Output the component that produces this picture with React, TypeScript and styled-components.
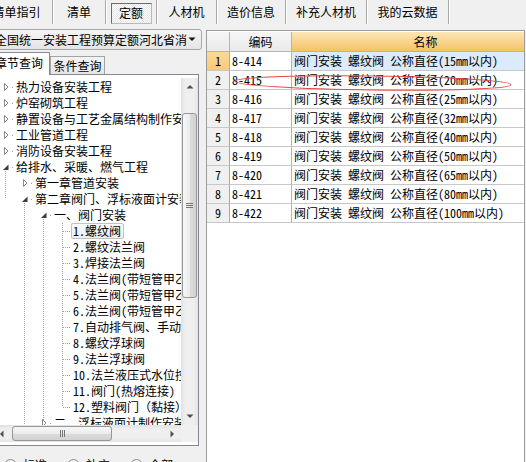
import React from 'react';
import styled, { createGlobalStyle } from 'styled-components';

const FONT = `"Noto Sans Mono CJK SC", "Noto Sans CJK SC", "Liberation Sans", sans-serif`;

const GlobalStyle = createGlobalStyle`
  *, *::before, *::after { box-sizing: border-box; }
  html, body { margin: 0; padding: 0; overflow: hidden; background: #f0f0f0; }
  body { font-family: ${FONT}; font-size: 12px; line-height: 16px; color: #000; }
`;

const Window = styled.div`
  width: 526px;
  height: 462px;
  overflow: hidden;
  display: flex;
  flex-direction: column;
  background: #f0f0f0;
`;

/* top tab strip */
const TabBar = styled.div`
  flex: none;
  display: flex;
  height: 25px;
  margin-left: -19px;
`;

const Tab = styled.div<{ $w: number }>`
  flex: none;
  width: ${p => p.$w}px;
  height: 24px;
  display: flex;
  align-items: center;
  justify-content: center;
  border-right: 1px solid #a9a9a9;
  box-shadow: 1px 0 0 #ffffff;
  white-space: nowrap;
`;

const Pressed = styled.span`
  width: 41px;
  height: 21px;
  margin-top: 2px;
  display: flex;
  align-items: center;
  justify-content: center;
  border: 1px solid #6d6d6d;
  border-right-color: #b9b9b9;
  border-bottom-color: #b9b9b9;
  background: repeating-conic-gradient(#ffffff 0 25%, #e4e4e4 0 50%) 0 0 / 2px 2px;
`;

const Main = styled.div`
  flex: 1;
  min-height: 0;
  display: flex;
  padding-top: 4px;
`;

/* left side: library picker + chapter tree */
const LeftPane = styled.div`
  flex: none;
  width: 202px;
  display: flex;
  flex-direction: column;
`;

const Combo = styled.div`
  flex: none;
  width: 212px;
  height: 21px;
  margin-left: -10px;
  display: flex;
  align-items: center;
  padding: 0 5px 0 4px;
  border: 1px solid #a6a6a6;
  border-radius: 3px;
  background: linear-gradient(#f5f5f5, #e5e5e5);
  white-space: nowrap;
`;

const ComboText = styled.span`
  flex: 1;
  overflow: hidden;
`;

const SubTabs = styled.div`
  flex: none;
  height: 22px;
  margin: 2px 0 0 -10px;
  display: flex;
  align-items: flex-end;
  position: relative;
  z-index: 1;
`;

const SubTab = styled.div<{ $active?: boolean }>`
  flex: none;
  display: flex;
  align-items: center;
  white-space: nowrap;
  border: 1px solid ${p => (p.$active ? '#898c95' : '#a3a3a3')};
  border-bottom: none;
  ${p =>
    p.$active
      ? `width: 60px; height: 23px; margin-bottom: -1px; padding: 0 0 2px 4px; background: #fff;`
      : `width: 55px; height: 18px; justify-content: center; background: linear-gradient(#f4f4f4, #e6e6e6);`}
`;

const TreeBox = styled.div`
  flex: none;
  width: 207px;
  height: 372px;
  margin-left: -8px;
  padding: 3px 0;
  border: 1px solid #828790;
  background: #fff;
  display: flex;
  flex-direction: column;
`;

const ScrollArea = styled.div`
  flex: 1;
  min-height: 0;
  display: flex;
`;

const TreeView = styled.div`
  flex: 1;
  min-width: 0;
  overflow: hidden;
  padding: 1px 0 0 7px;
`;

const TreeRowEl = styled.div`
  height: 16px;
  display: flex;
  align-items: center;
  white-space: nowrap;
`;

const Glyph = styled.svg`
  flex: none;
  display: block;
`;

const Label = styled.span<{ $selected?: boolean }>`
  height: 16px;
  display: flex;
  align-items: center;
  padding: 0 2px 0 1px;
  border: 1px solid ${p => (p.$selected ? '#c2c2c2' : 'transparent')};
  border-radius: 2px;
  background: ${p => (p.$selected ? 'linear-gradient(#fbfbfb, #eeeeee)' : 'transparent')};
`;

const VScroll = styled.div`
  flex: none;
  width: 17px;
  display: flex;
  flex-direction: column;
  background: linear-gradient(90deg, #e2e2e2, #efefef 25%, #efefef 75%, #e4e4e4);
`;

const ScrollBtn = styled.div`
  flex: none;
  width: 17px;
  height: 17px;
  display: flex;
  align-items: center;
  justify-content: center;
`;

const Track = styled.div<{ $dir: 'v' | 'h' }>`
  flex: 1;
  display: flex;
  flex-direction: ${p => (p.$dir === 'v' ? 'column' : 'row')};
`;

const Thumb = styled.div<{ $dir: 'v' | 'h' }>`
  flex: none;
  display: flex;
  align-items: center;
  justify-content: center;
  border: 1px solid #979797;
  border-radius: 3px;
  ${p =>
    p.$dir === 'v'
      ? `margin: 18px 1px 0; height: 185px; background: linear-gradient(90deg, #f7f7f7, #ececec 50%, #dcdcdc 51%, #d2d2d2);`
      : `margin: 1px 0 1px 2px; width: 100px; background: linear-gradient(#f7f7f7, #ececec 50%, #dcdcdc 51%, #d2d2d2);`}
`;

const HScrollRow = styled.div`
  flex: none;
  height: 17px;
  display: flex;
`;

const HScroll = styled.div`
  flex: 1;
  display: flex;
  background: linear-gradient(#e2e2e2, #efefef 25%, #efefef 75%, #e4e4e4);
`;

const Corner = styled.div`
  flex: none;
  width: 17px;
  background: #f0f0f0;
`;

const RadioRow = styled.div`
  flex: none;
  height: 20px;
  margin-top: 9px;
  padding-left: 4px;
  display: flex;
  align-items: center;
  gap: 20px;
`;

const RadioItem = styled.label`
  display: flex;
  align-items: center;
  gap: 6px;
`;

const RadioDot = styled.span<{ $on?: boolean }>`
  width: 13px;
  height: 13px;
  border-radius: 50%;
  border: 1px solid #8e8f8f;
  background: radial-gradient(circle, #ffffff 30%, #dedede);
  display: flex;
  align-items: center;
  justify-content: center;
  &::after {
    content: '';
    width: 5px;
    height: 5px;
    border-radius: 50%;
    background: ${p => (p.$on ? '#1c1c1c' : 'transparent')};
  }
`;

/* right side: quota grid */
const RightPane = styled.div`
  flex: 1;
  min-width: 0;
  margin: 1px 1px 0 4px;
  padding-top: 1px;
  position: relative;
  overflow: hidden;
  border: 1px solid #9c9c9c;
  border-bottom: none;
  background: #fff;
`;

const Grid = styled.div`
  display: grid;
  grid-template-columns: 23px 62px 268px;
`;

const HeadCell = styled.div<{ $orange?: boolean }>`
  height: 20px;
  display: flex;
  align-items: center;
  justify-content: center;
  border-right: 1px solid #b4b4b4;
  border-bottom: 1px solid #b4b4b4;
  background: ${p => (p.$orange ? 'linear-gradient(#fde7b6, #f4c266)' : 'linear-gradient(#f6f6f6, #eaeaea)')};
`;

const NumCell = styled.div<{ $current?: boolean }>`
  height: 19px;
  display: flex;
  align-items: center;
  justify-content: center;
  border-right: 1px solid #a9a9a9;
  border-bottom: 1px solid #c8c8c8;
  background: ${p => (p.$current ? 'linear-gradient(#fdd999, #f9c979)' : '#f0f0f0')};
`;

const Cell = styled.div<{ $tint?: boolean }>`
  height: 19px;
  display: flex;
  align-items: center;
  padding-left: 2px;
  white-space: nowrap;
  overflow: hidden;
  border-right: 1px solid #b4b4b4;
  border-bottom: 1px solid #c8c8c8;
  background: ${p => (p.$tint ? '#dcebfb' : '#ffffff')};
`;

const Mark = styled.svg`
  position: absolute;
  left: 0;
  top: 0;
  pointer-events: none;
`;

type Line = '' | 'f' | 't' | 'b';
type Kind = 'closed' | 'open' | 'leaf';

interface TreeItem {
  label: string;
  kind: Kind;
  cols: Line[];
  selected?: boolean;
}

const leaves = [
  '1.螺纹阀',
  '2.螺纹法兰阀',
  '3.焊接法兰阀',
  '4.法兰阀(带短管甲乙)',
  '5.法兰阀(带短管甲乙)',
  '6.法兰阀(带短管甲乙)',
  '7.自动排气阀、手动放风阀',
  '8.螺纹浮球阀',
  '9.法兰浮球阀',
  '10.法兰液压式水位控制阀',
  '11.阀门(热熔连接)',
  '12.塑料阀门（黏接）',
];

const tree: TreeItem[] = [
  { label: '热力设备安装工程', kind: 'closed', cols: [''] },
  { label: '炉窑砌筑工程', kind: 'closed', cols: [''] },
  { label: '静置设备与工艺金属结构制作安装工程', kind: 'closed', cols: [''] },
  { label: '工业管道工程', kind: 'closed', cols: [''] },
  { label: '消防设备安装工程', kind: 'closed', cols: [''] },
  { label: '给排水、采暖、燃气工程', kind: 'open', cols: ['b'] },
  { label: '第一章管道安装', kind: 'closed', cols: ['f', ''] },
  { label: '第二章阀门、浮标液面计安装', kind: 'open', cols: ['t', 'b'] },
  { label: '一、阀门安装', kind: 'open', cols: ['', 'f', 'b'] },
  ...leaves.map((label, i) => ({
    label,
    kind: 'leaf' as Kind,
    cols: ['', 'f', 'f', i === leaves.length - 1 ? 't' : 'f'] as Line[],
    selected: i === 0,
  })),
  { label: '二、浮标液面计制作安装', kind: 'closed', cols: ['', 'f', 't'] },
];

const DOT = '#a0a0a0';

const VLine = ({ mode }: { mode: Line }) => {
  if (!mode) return null;
  const y1 = mode === 'b' ? 12 : 0;
  const y2 = mode === 't' ? 8 : 16;
  return <line x1={5.5} y1={y1} x2={5.5} y2={y2} stroke={DOT} strokeDasharray="1 1" shapeRendering="crispEdges" />;
};

const TreeRow = ({ item }: { item: TreeItem }) => {
  const level = item.cols.length - 1;
  const own = item.cols[level];
  return (
    <TreeRowEl>
      {item.cols.slice(0, level).map((m, c) => (
        <Glyph key={c} width={19} height={16}>
          <VLine mode={m} />
        </Glyph>
      ))}
      <Glyph width={14} height={16}>
        {item.kind === 'leaf' ? (
          <>
            <VLine mode={own} />
            <line x1={6} y1={8.5} x2={14} y2={8.5} stroke={DOT} strokeDasharray="1 1" shapeRendering="crispEdges" />
          </>
        ) : (
          <>
            <VLine mode={own} />
            {item.kind === 'closed' ? (
              <polygon points="4.5,4.5 4.5,11.5 8,8" fill="#fff" stroke="#8a8a8a" strokeWidth={1} />
            ) : (
              <polygon points="3,11 8.5,11 8.5,5.5" fill="#3c3c3c" />
            )}
            <rect x={12} y={8} width={1} height={1} fill={DOT} />
          </>
        )}
      </Glyph>
      <Label $selected={item.selected}>{item.label}</Label>
    </TreeRowEl>
  );
};

const Arrow = ({ dir, color = '#505050' }: { dir: 'up' | 'down' | 'left' | 'right'; color?: string }) => {
  const pts = {
    up: '0.5,4.5 7.5,4.5 4,1',
    down: '0.5,0.5 7.5,0.5 4,4',
    left: '4.5,0.5 4.5,7.5 1,4',
    right: '0.5,0.5 0.5,7.5 4,4',
  }[dir];
  const v = dir === 'up' || dir === 'down';
  return (
    <svg width={v ? 8 : 5} height={v ? 5 : 8}>
      <polygon points={pts} fill={color} />
    </svg>
  );
};

const Grip = ({ dir }: { dir: 'v' | 'h' }) => (
  <svg width={dir === 'v' ? 7 : 7} height={dir === 'v' ? 7 : 7}>
    {[0, 2, 4].map(o =>
      dir === 'v' ? (
        <rect key={o} x={0} y={o + 1} width={7} height={1} fill="#777" />
      ) : (
        <rect key={o} x={o + 1} y={0} width={1} height={7} fill="#777" />
      ),
    )}
  </svg>
);

const tabs: { label: string; w: number; active?: boolean }[] = [
  { label: '清单指引', w: 72 },
  { label: '清单', w: 53 },
  { label: '定额', w: 51, active: true },
  { label: '人材机', w: 60 },
  { label: '造价信息', w: 69 },
  { label: '补充人材机', w: 81 },
  { label: '我的云数据', w: 82 },
];

const rows = [
  ['8-414', '15'],
  ['8-415', '20'],
  ['8-416', '25'],
  ['8-417', '32'],
  ['8-418', '40'],
  ['8-419', '50'],
  ['8-420', '65'],
  ['8-421', '80'],
  ['8-422', '100'],
];

export default function App() {
  return (
    <>
      <GlobalStyle />
      <Window>
        <TabBar>
          {tabs.map(t => (
            <Tab key={t.label} $w={t.w}>
              {t.active ? <Pressed>{t.label}</Pressed> : t.label}
            </Tab>
          ))}
        </TabBar>

        <Main>
          <LeftPane>
            <Combo>
              <ComboText>全国统一安装工程预算定额河北省消</ComboText>
              <Arrow dir="down" color="#111" />
            </Combo>

            <SubTabs>
              <SubTab $active>章节查询</SubTab>
              <SubTab>条件查询</SubTab>
            </SubTabs>

            <TreeBox>
              <ScrollArea>
                <TreeView>
                  {tree.map((item, i) => (
                    <TreeRow key={i} item={item} />
                  ))}
                </TreeView>
                <VScroll>
                  <ScrollBtn>
                    <Arrow dir="up" />
                  </ScrollBtn>
                  <Track $dir="v">
                    <Thumb $dir="v">
                      <Grip dir="v" />
                    </Thumb>
                  </Track>
                  <ScrollBtn>
                    <Arrow dir="down" />
                  </ScrollBtn>
                </VScroll>
              </ScrollArea>
              <HScrollRow>
                <HScroll>
                  <ScrollBtn>
                    <Arrow dir="left" />
                  </ScrollBtn>
                  <Track $dir="h">
                    <Thumb $dir="h">
                      <Grip dir="h" />
                    </Thumb>
                  </Track>
                  <ScrollBtn>
                    <Arrow dir="right" />
                  </ScrollBtn>
                </HScroll>
                <Corner />
              </HScrollRow>
            </TreeBox>

            <RadioRow>
              <RadioItem>
                <RadioDot />
                标准
              </RadioItem>
              <RadioItem>
                <RadioDot />
                补充
              </RadioItem>
              <RadioItem>
                <RadioDot $on />
                全部
              </RadioItem>
            </RadioRow>
          </LeftPane>

          <RightPane>
            <Grid>
              <HeadCell />
              <HeadCell>编码</HeadCell>
              <HeadCell $orange>名称</HeadCell>
              {rows.map(([code, dn], i) => (
                <React.Fragment key={code}>
                  <NumCell $current={i === 0}>{i + 1}</NumCell>
                  <Cell>{code}</Cell>
                  <Cell $tint={i === 0}>{`阀门安装 螺纹阀 公称直径(${dn}mm以内)`}</Cell>
                </React.Fragment>
              ))}
            </Grid>
            <Mark width={318} height={100}>
              <ellipse
                cx={166}
                cy={52}
                rx={138}
                ry={7}
                fill="none"
                stroke="#e2494b"
                strokeWidth={1}
                transform="rotate(0.7 166 52)"
              />
            </Mark>
          </RightPane>
        </Main>
      </Window>
    </>
  );
}
